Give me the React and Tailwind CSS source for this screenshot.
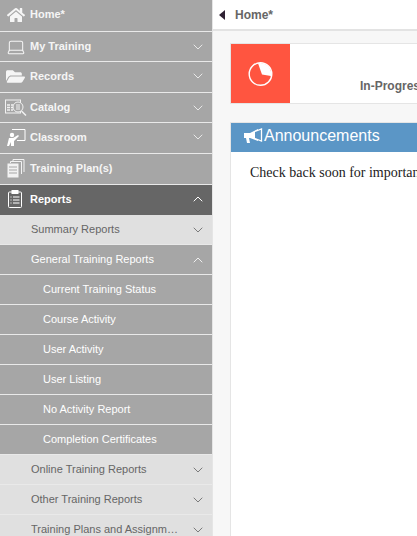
import { ChevronDown, ChevronUp, Laptop } from "lucide-react";
import { FaHome, FaFolderOpen } from "react-icons/fa";

const CatalogIcon = () => (
  <svg width="22" height="18" viewBox="0 0 22 18" fill="none" stroke="#f2f2f2" strokeWidth="1">
    <rect x="0.5" y="1" width="15" height="13" />
    <path d="M2 6h3M2 8.5h3M2 11h3M6 6h2M6 8.5h2M6 11h2" strokeWidth="1.5" />
    <circle cx="13" cy="8" r="5" fill="#a6a6a6" />
    <path d="M11 6h4M11 8h4M11 10h4" />
    <path d="M16.5 12l4.5 4.5" strokeWidth="1.5" />
  </svg>
);

const ClassroomIcon = () => (
  <svg width="20" height="19" viewBox="0 0 20 19" fill="none">
    <path d="M6 1.5h13v11h-8" stroke="#fff" />
    <circle cx="6" cy="7" r="2.2" fill="#fff" />
    <path d="M1 18l2-8h4l5-3 1 1-5 5v5H5v-4l-2 4z" fill="#fff" />
  </svg>
);

const PlanIcon = () => (
  <svg width="18" height="20" viewBox="0 0 18 20" fill="none" stroke="#f2f2f2">
    <path d="M6 3V1.5h11V14" />
    <path d="M3.5 5V3.5h11V16" />
    <rect x="0.5" y="5.5" width="11" height="14" fill="#f2f2f2" stroke="none" />
    <path d="M2 9h8M2 12h8M2 15h8" stroke="#a6a6a6" />
  </svg>
);

const ReportsIcon = () => (
  <svg width="14" height="18" viewBox="0 0 14 18" fill="none" stroke="#fff">
    <rect x="0.5" y="2" width="13" height="15.5" rx="1" />
    <rect x="4" y="0.5" width="6" height="3" fill="#fff" />
    <path d="M2.5 7h1M5 7h6.5M2.5 10h1M5 10h6.5M2.5 13h1M5 13h6.5" />
  </svg>
);

const MegaphoneIcon = () => (
  <svg width="20" height="16" viewBox="0 0 20 16" fill="none">
    <path d="M1 5h6l8-4v12L7 10H6l1 5H4L3 10H1z" fill="#fff" />
    <path d="M12 3.5L18.5 1v12L12 10.5" stroke="#fff" strokeWidth="1.3" fill="#5b96c6" />
  </svg>
);

const mainItems = [
  { label: "Home*", icon: <FaHome size={18} />, h: "h-[32px] pb-[2px]" },
  { label: "My Training", icon: <Laptop size={20} strokeWidth={1.25} />, chevron: true, h: "h-[30px]" },
  { label: "Records", icon: <FaFolderOpen size={19} />, chevron: true, h: "h-[31px] pb-[2px]" },
  { label: "Catalog", icon: <CatalogIcon />, chevron: true, h: "h-[30px]" },
  { label: "Classroom", icon: <ClassroomIcon />, chevron: true, h: "h-[31px] pb-[2px]" },
  { label: "Training Plan(s)", icon: <PlanIcon />, h: "h-[31px] pb-[2px]" },
];

const reportLinks = [
  "Current Training Status",
  "Course Activity",
  "User Activity",
  "User Listing",
  "No Activity Report",
  "Completion Certificates",
];

const lowerReports = ["Online Training Reports", "Other Training Reports", "Training Plans and Assignm…"];

const SubRow = ({ label, open }) => (
  <div className={`flex h-[30px] shrink-0 items-center border-b border-[#e9e9e9] pl-[31px] pr-[6px] text-[11px] ${open ? "bg-[#a6a6a6] text-white" : "bg-[#e0e0e0] text-[#666]"}`}>
    <span className="flex-1 truncate">{label}</span>
    {open ? <ChevronUp size={16} strokeWidth={1.25} /> : <ChevronDown size={16} strokeWidth={1.25} />}
  </div>
);

export default function App() {
  return (
    <div className="flex h-[536px] w-[417px] overflow-hidden bg-[#f7f7f7] font-['Liberation_Sans',sans-serif]">
      <aside className="flex w-[213px] shrink-0 flex-col overflow-hidden border-r border-[#e5e5e5]">
        {mainItems.map((item) => (
          <div key={item.label} className={`flex ${item.h} shrink-0 items-center border-b border-[#e9e9e9] bg-[#a6a6a6] pr-[6px] text-[11px] font-bold text-[#f5f5f5]`}>
            <span className="flex w-[30px] shrink-0 justify-center pl-[1px]">{item.icon}</span>
            <span className="flex-1">{item.label}</span>
            {item.chevron && <ChevronDown size={16} strokeWidth={1.25} />}
          </div>
        ))}
        <div className="flex h-[30px] shrink-0 items-center bg-[#666] pb-[2px] pr-[6px] text-[11px] font-bold text-white">
          <span className="flex w-[30px] shrink-0 justify-center"><ReportsIcon /></span>
          <span className="flex-1">Reports</span>
          <ChevronUp size={16} strokeWidth={1.5} />
        </div>
        <SubRow label="Summary Reports" />
        <SubRow label="General Training Reports" open />
        {reportLinks.map((label) => (
          <div key={label} className="flex h-[30px] shrink-0 items-center border-b border-[#e9e9e9] bg-[#a6a6a6] pl-[43px] text-[11px] text-white last:border-b-0">
            {label}
          </div>
        ))}
        {lowerReports.map((label) => (
          <SubRow key={label} label={label} />
        ))}
      </aside>

      <main className="min-w-0 flex-1">
        <div className="flex h-[31px] items-center border-b-2 border-[#e3e3e3] bg-white pl-[6px] text-[12px] font-bold text-[#666]">
          <span className="mr-[6px] h-0 w-0 border-y-[5px] border-r-[6px] border-y-transparent border-r-[#2f2233]" />
          <span className="ml-[4px]">Home*</span>
        </div>
        <div className="w-[300px] pl-[17px] pt-[12px]">
          <div className="flex h-[61px] border border-[#e5e5e5] bg-white">
            <div className="flex w-[59px] shrink-0 items-center justify-center bg-[#ff5540]">
              <svg width="26" height="26" viewBox="0 0 26 26" fill="none">
                <circle cx="12.5" cy="13" r="11.3" stroke="#fff" strokeWidth="1.4" />
                <path d="M10 2.3A10.8 10.8 0 0 1 23 15L14 13.5z" fill="#fff" />
              </svg>
            </div>
            <div className="flex flex-1 items-end pb-[8px] pl-[70px] text-[12px] font-bold whitespace-nowrap text-[#666]">In-Progress</div>
          </div>
          <div className="mt-[18px] h-[420px] border border-[#e5e5e5] bg-white">
            <div className="flex h-[29px] items-center gap-[1px] bg-[#5b96c6] pb-[3px] pl-[12px] text-[16px] text-white">
              <MegaphoneIcon />
              <span>Announcements</span>
            </div>
            <p className="mt-[10px] pl-[19px] font-['Liberation_Serif',serif] text-[14px] whitespace-nowrap text-[#222]">
              Check back soon for important announcements.
            </p>
          </div>
        </div>
      </main>
    </div>
  );
}
